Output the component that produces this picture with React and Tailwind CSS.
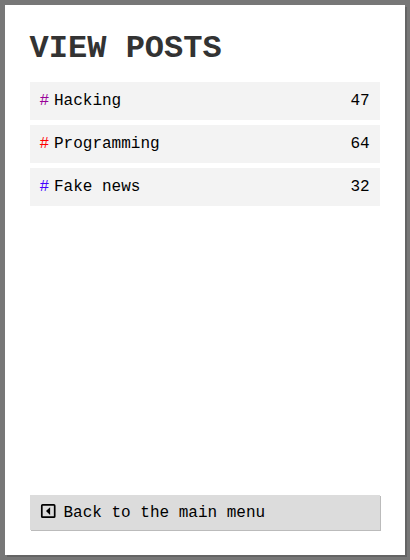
const posts = [
  { name: 'Hacking', count: 47, color: 'text-[#990099]' },
  { name: 'Programming', count: 64, color: 'text-[#ff0000]' },
  { name: 'Fake news', count: 32, color: 'text-[#4400ff]' },
];

function PostRow({ name, count, color }) {
  return (
    <li className="flex h-[38px] items-center bg-[#f3f3f3] pr-[10.4px] pl-[9.6px]">
      <span className={color}>#</span>
      <span className="ml-[4.8px] grow">{name}</span>
      <span>{count}</span>
    </li>
  );
}

function BackIcon() {
  return (
    <svg className="mr-[7.5px] mb-[3px] h-[16px] w-[16px]" viewBox="0 0 16 16" fill="none">
      <rect x="1.8" y="1.9" width="12.9" height="12.3" rx="0.8" stroke="#000" strokeWidth="1.7" />
      <path d="M10.1 4.2v7.8L6 8.1z" fill="#000" />
    </svg>
  );
}

export default function App() {
  return (
    <div className="flex h-screen bg-[#777777] p-[5px] font-['Liberation_Mono',monospace] text-base leading-[18px] text-black">
      <main className="flex grow flex-col bg-white p-[25px] shadow-[2px_2px_0_#646464]">
        <h1 className="-ml-[0.4px] pt-px text-[32px] leading-[36px] font-bold text-[#333333]">VIEW POSTS</h1>
        <ul className="mt-[15px] flex flex-col gap-[5px]">
          {posts.map((post) => (
            <PostRow key={post.name} {...post} />
          ))}
        </ul>
        <button className="mt-auto flex h-[35px] items-center bg-[#dcdcdc] px-2.5 shadow-[1px_1px_0_#bbbbbb]">
          <BackIcon />
          Back to the main menu
        </button>
      </main>
    </div>
  );
}
